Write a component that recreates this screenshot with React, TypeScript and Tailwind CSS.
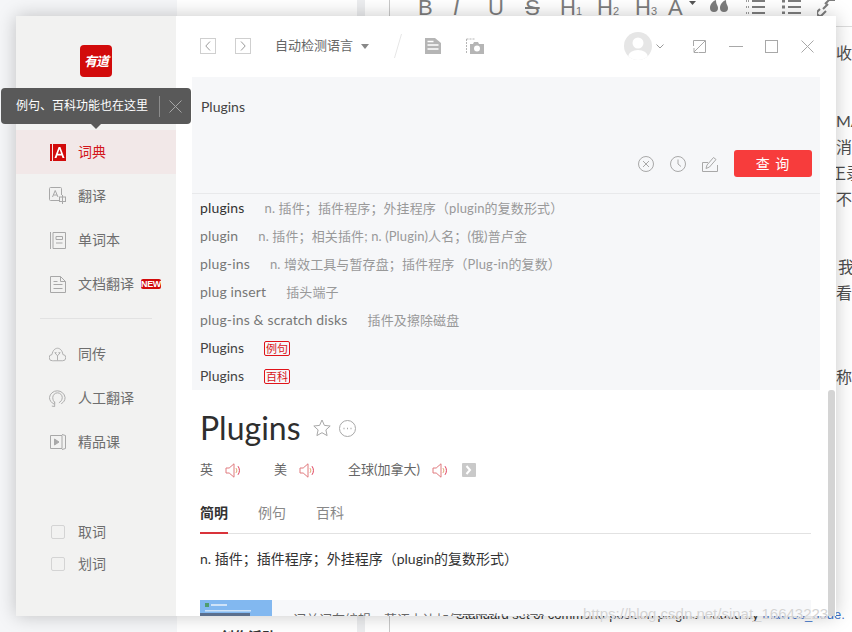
import React from "react";

const G = "#a8a8a8";

function Speaker() {
  return (
    <svg width="17" height="17" viewBox="0 0 17 17" fill="none" className="shrink-0">
      <path d="M1 6h3.200L9 1.800v13.400L4.200 11H1z" stroke="#e07a7e" strokeWidth="1" />
      <path d="M11 6.200c1 1.300 1 3.300 0 4.600" stroke="#d9a05b" strokeWidth="1" />
      <path d="M13 4.200c1.900 2.400 1.900 6.200 0 8.600" stroke="#e0405e" strokeWidth="1" />
    </svg>
  );
}

function Row({ icon, label, active, extra }: { icon: React.ReactNode; label: string; active?: boolean; extra?: React.ReactNode }) {
  return (
    <div className={active ? "flex h-11 items-center bg-[#f2e8e8] pl-[33px]" : "flex h-11 items-center pl-[33px]"}>
      <div className="flex w-[17px] justify-center">{icon}</div>
      <span className={active ? "ml-[12px] text-sm text-[#d3161c]" : "ml-[12px] text-sm text-[#6e6e6e]"}>{label}</span>
      {extra}
    </div>
  );
}

function Check({ label }: { label: string }) {
  return (
    <div className="flex h-8 items-center pl-[35px]">
      <div className="h-[14px] w-[14px] rounded-[2px] border border-[#d4d4d4]" />
      <span className="ml-[13px] text-sm text-[#6e6e6e]">{label}</span>
    </div>
  );
}

function Sug({ w, t, dark }: { w: string; t: string; dark?: boolean }) {
  return (
    <div className="flex h-7 items-center pl-2 text-sm">
      <span className={dark ? "tracking-[0.15px] text-[#333]" : "tracking-[0.15px] text-[#777]"}>{w}</span>
      <span className="ml-5 text-[13px] tracking-[0.12px] text-[#999]">{t}</span>
    </div>
  );
}

function Tag({ w, t }: { w: string; t: string }) {
  return (
    <div className="flex h-7 items-center pl-2 text-sm text-[#444]">
      <span>{w}</span>
      <span className="ml-5 flex h-[15px] w-[26px] items-center justify-center rounded-[2px] border border-[#e0131a] text-[11px] leading-none text-[#d8141a]">{t}</span>
    </div>
  );
}

function ListIcon({ dotted }: { dotted?: boolean }) {
  return (
    <svg width="19" height="14" viewBox="0 0 19 14" fill="none" stroke="#7d7d7d" strokeWidth="2">
      <path d="M6 1h13M6 7h13M6 13h13" />
      <path d="M0 1h3M0 7h3M0 13h3" strokeDasharray={dotted ? "1 1" : undefined} strokeWidth={dotted ? 1.500 : 3} />
    </svg>
  );
}

export default function App() {
  return (
    <div className="relative h-[632px] w-[852px] overflow-hidden bg-white font-['Lato','Noto_Sans_CJK_SC',sans-serif]">
      {/* page behind the window */}
      <div className="flex h-full">
        <div className="w-[177px] bg-[#f5f6f8]" />
        <div className="w-[180px] pl-[20px] pt-[629px] text-sm font-bold leading-4 text-[#333]">
          <span className="mr-[13px] inline-block h-[10px] w-[10px] rounded-full border-2 border-[#d9322e]" />
          创作活动
        </div>
        <div className="w-2 bg-[#ecedef]" />
        <div className="w-6" />
        <div className="w-[463px] border-l border-[#c9c9c9]">
          <div className="flex h-[27px] items-start border-b border-[#dddddd] pl-[28px] font-['Liberation_Sans',sans-serif] text-[22px] leading-[15px] text-[#7d7d7d]">
            <span className="w-[35px]">B</span>
            <span className="w-[35px] italic">I</span>
            <span className="w-[37px] underline">U</span>
            <span className="w-[35px] line-through">S</span>
            <span className="w-[37px]">H<span className="text-[11px]">1</span></span>
            <span className="w-[38px]">H<span className="text-[11px]">2</span></span>
            <span className="w-[33px]">H<span className="text-[11px]">3</span></span>
            <span className="flex w-[42px] items-start">
              <span className="underline">A</span>
              <svg className="ml-[6px] mt-px" width="7" height="4" viewBox="0 0 7 4"><path d="M0 0h7L3.500 4z" fill="#555" /></svg>
            </span>
            <svg className="w-[36px] shrink-0" width="18" height="12" viewBox="0 0 36 12" fill="#7d7d7d">
              <path d="M0 8a4 4 0 1 0 8 0c0-3-2-3-2-8C3 1 0 4 0 8zM10 8a4 4 0 1 0 8 0c0-3-2-3-2-8-3 1-6 4-6 8z" />
            </svg>
            <div className="w-[36px] shrink-0"><ListIcon dotted /></div>
            <div className="w-[35px] shrink-0"><ListIcon /></div>
            <svg width="19" height="16" viewBox="0 0 19 16" fill="none" stroke="#7d7d7d" strokeWidth="2">
              <path d="M8 4 12 0h6M3 9 1 11a2.800 2.800 0 0 0 4 4l4-4M6 9l5-5" />
            </svg>
          </div>
          <div className="whitespace-nowrap pl-[446px] text-base leading-6 text-[#4d4d4d]">
            <div className="-ml-4 mt-[14px]">接收内容</div>
            <div className="mt-[44px]">MA</div>
            <div className="mt-[2px]">消息</div>
            <div className="-ml-[6px] mt-[2px]">正录</div>
            <div className="mt-[2px]">不同</div>
            <div className="mt-[44px] pl-[2px]">我</div>
            <div className="mt-[2px]">看的</div>
            <div className="mt-[60px]">称为</div>
          </div>
          <div className="mt-[218px] whitespace-nowrap pl-[66px] font-['Liberation_Sans',sans-serif] text-[13px] leading-4 text-[#333]">
            Standard set of command-position plugins loaded by <span className="text-[#3f74c9]">mavros_node.</span>
          </div>
        </div>
      </div>

      {/* the dictionary window */}
      <div className="absolute left-4 top-4 flex h-[600px] w-[820px] overflow-hidden bg-white text-[#333] shadow-[0_0_18px_rgba(0,0,0,0.22)]">
        {/* sidebar */}
        <div className="flex w-40 shrink-0 flex-col bg-[#f2f2f1]">
          <div className="ml-16 mt-[29px] flex h-8 w-8 items-center justify-center rounded-[4px] bg-[#d20b0b] font-['Noto_Sans_CJK_SC',sans-serif] text-[13px] font-bold italic tracking-[-1px] text-white">
            有道
          </div>
          <div className="mt-[53px]">
            <Row
              active
              label="词典"
              icon={
                <svg width="16" height="17" viewBox="0 0 16 17">
                  <rect x="0" y="0" width="16" height="17" fill="#d20b0b" />
                  <rect x="2" y="0" width="1" height="17" fill="#f2e8e8" />
                  <path d="M4.500 14 8.600 3h1.800L14.500 14h-2l-.8-2.400H7.300L6.500 14zM7.900 9.800h3.200L9.500 5.300z" fill="#fff" />
                </svg>
              }
            />
            <Row
              label="翻译"
              icon={
                <svg width="17" height="18" viewBox="0 0 17 18" fill="none" stroke={G}>
                  <path d="M10 13.500H1.500a1 1 0 0 1-1-1v-11a1 1 0 0 1 1-1h10a1 1 0 0 1 1 1V8" />
                  <path d="m3.500 10 2.700-6.500L9 10M4.600 8h3.400" />
                  <rect x="10.500" y="10" width="6" height="4.500" />
                  <path d="M13.500 8v9" />
                </svg>
              }
            />
            <Row
              label="单词本"
              icon={
                <svg width="16" height="17" viewBox="0 0 16 17" fill="none" stroke={G}>
                  <path d="M.5 0v17M3 .5h12.500v16H3zM6 4.500h6.500v3H6zM6 11h6.500" />
                </svg>
              }
            />
            <Row
              label="文档翻译"
              icon={
                <svg width="16" height="17" viewBox="0 0 16 17" fill="none" stroke={G}>
                  <path d="M.5.5h10l5 5v11H.5zM10.500.5v5h5M3.500 8.500h9M3.500 12.500h9M3.500 5.500h4" />
                </svg>
              }
              extra={
                <span className="ml-[7px] flex h-[10px] w-[20px] items-center justify-center rounded-[2px] bg-[#d20b0b] font-['Liberation_Sans',sans-serif] text-[9px] font-bold leading-none tracking-[-0.3px] text-white">
                  NEW
                </span>
              }
            />
          </div>
          <div className="mx-6 mt-3 h-px bg-[#e2e2e2]" />
          <div className="mt-[13px]">
            <Row
              label="同传"
              icon={
                <svg width="19" height="15" viewBox="0 0 19 15" fill="none" stroke={G}>
                  <path d="M5 14.500H4a3.500 3.500 0 0 1-.6-7C4 3 6.800.5 9.500.5s5.500 2.500 6 7a3.500 3.500 0 0 1-.5 7z" />
                  <path d="m6.500 5.500 3 3.500 3-3.500M9.500 9v5M6.500 5.500h2M10.500 5.500h2" />
                </svg>
              }
            />
            <Row
              label="人工翻译"
              icon={
                <svg width="18" height="19" viewBox="0 0 18 19" fill="none" stroke={G}>
                  <path d="M5.500 15.500C2.500 14 .5 11.500.5 8.500a8.300 8 0 0 1 16.500 0c0 3-1.500 5-4 6.500" />
                  <path d="M6.500 14c-1.500-1-2.500-3-2.500-5.500a5 5 0 0 1 10 0c0 2.500-1.500 4.500-3.500 5.500M6 13v5l-3-.5" />
                </svg>
              }
            />
            <Row
              label="精品课"
              icon={
                <svg width="16" height="16" viewBox="0 0 16 16" fill="none" stroke={G}>
                  <path d="M.5 1.500h11.500v13H.5zM12 .5l3.500 1v13l-3.500 1" />
                  <path d="M4.500 5v6l4.500-3z" fill={G} />
                </svg>
              }
            />
          </div>
          <div className="mt-[52px]">
            <Check label="取词" />
            <Check label="划词" />
          </div>
        </div>

        {/* main */}
        <div className="relative flex min-w-0 flex-1 flex-col">
          <div className="flex h-[61px] shrink-0 items-center pb-px pl-6">
            <div className="flex h-4 w-4 items-center justify-center border border-[#cfcfcf]">
              <svg width="6" height="10" viewBox="0 0 6 10" fill="none" stroke="#999"><path d="M5 .5.8 5 5 9.500" /></svg>
            </div>
            <div className="ml-[19px] flex h-4 w-4 items-center justify-center border border-[#cfcfcf]">
              <svg width="6" height="10" viewBox="0 0 6 10" fill="none" stroke="#999"><path d="M1 .5 5.200 5 1 9.500" /></svg>
            </div>
            <span className="ml-6 text-[13px] text-[#666]">自动检测语言</span>
            <svg className="ml-2" width="8" height="5" viewBox="0 0 8 5"><path d="M0 0h8L4 5z" fill="#888" /></svg>
            <svg className="ml-[25px]" width="8" height="24" viewBox="0 0 8 24" fill="none" stroke="#e6e6e6"><path d="M7.500 0 .5 24" /></svg>
            <svg className="ml-[23px]" width="16" height="16" viewBox="0 0 16 16">
              <path d="M0 0h10l6 5v11H0z" fill="#b5b5b5" />
              <path d="M2.500 7h11M2.500 11h11M2.500 3.500h6" stroke="#fff" strokeWidth="1.500" />
            </svg>
            <svg className="ml-[25px]" width="18" height="16" viewBox="0 0 18 16">
              <path d="M.5 1v14M.5 1h9" stroke="#b5b5b5" strokeDasharray="2 1" fill="none" />
              <path d="M4 6h3l1-2h4l1 2h5v10H4z" fill="#b5b5b5" />
              <circle cx="11" cy="10.500" r="3" fill="#fff" />
            </svg>
            <div className="ml-[140px] h-7 w-7 overflow-hidden rounded-full bg-[#e6e6e6]">
              <svg width="28" height="28" viewBox="0 0 28 28">
                <circle cx="14" cy="11" r="5.500" fill="#fff" />
                <ellipse cx="14" cy="25" rx="10" ry="7" fill="#fff" />
              </svg>
            </div>
            <svg className="ml-[4px]" width="8" height="5" viewBox="0 0 8 5" fill="none" stroke="#999"><path d="m.5.5 3.500 3.500L7.500.5" /></svg>
            <svg className="ml-[29px]" width="13" height="13" viewBox="0 0 13 13" fill="none" stroke={G}>
              <path d="M.5 6V.5h12v12H6M12 1 1 12M1 8v4.500h4.500" />
            </svg>
            <div className="ml-[23px] h-px w-[14px] bg-[#a8a8a8]" />
            <div className="ml-[22px] h-[13px] w-[13px] border border-[#a8a8a8]" />
            <svg className="ml-[23px]" width="13" height="13" viewBox="0 0 13 13" fill="none" stroke={G}><path d="m.5.500 12 12M12.500.5l-12 12" /></svg>
          </div>

          <div className="mx-4 shrink-0 bg-[#f6f7f9]">
            <div className="flex h-[117px] flex-col border-b border-[#e8e9eb] pl-[9px]">
              <div className="mt-[21px] text-sm leading-[18px] text-[#444]">Plugins</div>
              <div className="mt-[34px] flex h-[27px] items-center pr-2">
                <div className="ml-auto flex items-center gap-4">
                  <svg width="16" height="16" viewBox="0 0 16 16" fill="none" stroke={G}><circle cx="8" cy="8" r="7.500" /><path d="m5 5 6 6M11 5l-6 6" /></svg>
                  <svg width="16" height="16" viewBox="0 0 16 16" fill="none" stroke={G}><circle cx="8" cy="8" r="7.500" /><path d="M8 3.500V8l3 2.500" /></svg>
                  <svg width="16" height="16" viewBox="0 0 16 16" fill="none" stroke={G}><path d="M6 6.500H.5v9h15V9M4 12.500l1-3.500 6.500-7.500 2.500 2-6.500 7.500z" /></svg>
                </div>
                <div className="ml-4 flex h-[27px] w-[78px] items-center justify-center rounded-[3px] bg-[#f73c3c] text-sm tracking-[1px] text-white">
                  查 询
                </div>
              </div>
            </div>
            <Sug dark w="plugins" t="n. 插件；插件程序；外挂程序（plugin的复数形式）" />
            <Sug w="plugin" t="n. 插件；相关插件; n. (Plugin)人名；(俄)普卢金" />
            <Sug w="plug-ins" t="n. 增效工具与暂存盘；插件程序（Plug-in的复数）" />
            <Sug w="plug insert" t="插头端子" />
            <Sug w="plug-ins & scratch disks" t="插件及擦除磁盘" />
            <Tag w="Plugins" t="例句" />
            <Tag w="Plugins" t="百科" />
          </div>

          <div className="flex-1 pl-6 pr-[25px]">
            <div className="mt-[18px] flex h-10 items-center">
              <span className="text-[32px] leading-10 text-[#2e2e2e]">Plugins</span>
              <svg className="ml-[12px]" width="18" height="18" viewBox="0 0 18 18" fill="none" stroke={G}><path d="m9 1 2.400 5.400 5.800.6-4.300 3.900 1.200 5.700L9 13.700l-5.100 2.900 1.200-5.700L.8 7l5.800-.6z" /></svg>
              <svg className="ml-[8px]" width="17" height="17" viewBox="0 0 17 17" fill="none" stroke={G}>
                <circle cx="8.500" cy="8.500" r="8" />
                <path d="M4.500 8.500h1M8 8.500h1M11.500 8.500h1" strokeWidth="1.500" />
              </svg>
            </div>
            <div className="mt-[12px] flex h-[20px] items-center text-[13px] text-[#666]">
              <span>英</span>
              <span className="ml-[12px]"><Speaker /></span>
              <span className="ml-[32px]">美</span>
              <span className="ml-[12px]"><Speaker /></span>
              <span className="ml-[32px]">全球(加拿大)</span>
              <span className="ml-[12px]"><Speaker /></span>
              <div className="ml-[13px] flex h-[14px] w-[14px] items-center justify-center rounded-[1px] bg-[#c9c9c9]">
                <svg width="7" height="10" viewBox="0 0 7 10" fill="none" stroke="#fff" strokeWidth="2"><path d="m1.500 1 3.500 4-3.500 4" /></svg>
              </div>
            </div>
            <div className="mt-[21px] flex h-[33px] border-b border-[#e2e2e2] text-sm">
              <div className="h-[33px] w-7 border-b-2 border-[#d9333a] font-bold leading-[23px] text-[#333]">简明</div>
              <div className="ml-[30px] leading-[23px] text-[#888]">例句</div>
              <div className="ml-[30px] leading-[23px] text-[#888]">百科</div>
            </div>
            <div className="mt-[15px] h-[20px] text-sm leading-[20px] text-[#333]">n. 插件；插件程序；外挂程序（plugin的复数形式）</div>
            <div className="mt-[31px] flex h-[70px] bg-[#f7f8fa]">
              <svg className="shrink-0" width="72" height="70" viewBox="0 0 72 70">
                <rect width="72" height="70" fill="#82b8f0" />
                <rect x="5" y="3" width="4" height="4" fill="#4f9d6f" />
                <rect x="11" y="4" width="16" height="2" fill="#cfe3f8" />
                <rect x="5" y="10" width="46" height="1.500" fill="#cfe3f8" />
                <rect x="0" y="13" width="50" height="3" fill="#5b6f8e" />
              </svg>
              <span className="ml-[21px] mt-[10px] text-[13px] leading-[18px] text-[#666]">词关词在编辑；英语上边加何不跟改'see'词?</span>
            </div>
          </div>

          <div className="absolute bottom-0 right-px h-[226px] w-[7px] rounded-t-[3px] bg-[#d4d4d4]" />
        </div>
      </div>

      {/* tooltip over the sidebar */}
      <div className="absolute left-px top-[88px] flex h-9 w-[190px] items-center rounded-[4px] bg-[#595959] pl-[15px] text-xs text-white">
        <span>例句、百科功能也在这里</span>
        <div className="ml-[11px] h-[21px] w-px bg-[#8c8c8c]" />
        <svg className="ml-[9px]" width="13" height="13" viewBox="0 0 13 13" fill="none" stroke="#a6a6a6"><path d="m.5.5 12 12M12.500.5l-12 12" /></svg>
        <div className="absolute left-[90px] top-9 h-0 w-0 border-x-[5px] border-t-[5px] border-x-transparent border-t-[#595959]" />
      </div>

      {/* watermark */}
      <div className="absolute left-[583px] top-[604px] whitespace-nowrap font-['Liberation_Sans',sans-serif] text-[15px] leading-5 text-[#d4d4d4] [text-shadow:0_0_1px_rgba(255,255,255,0.9)]">
        https://blog.csdn.net/sinat_16643223
      </div>
    </div>
  );
}
